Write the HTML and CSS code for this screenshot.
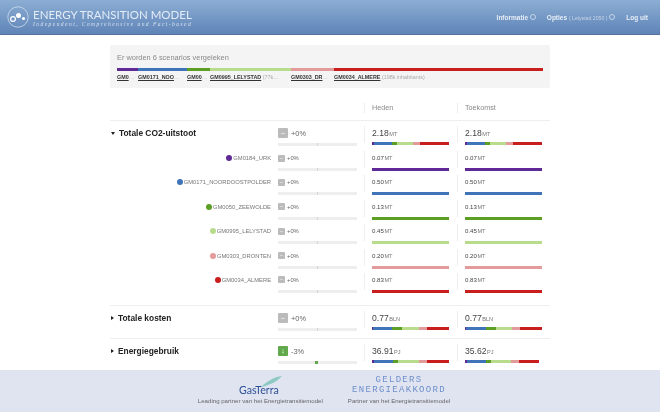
FILE: index.html
```html
<!DOCTYPE html>
<html>
<head>
    <title>Energy Transition Model</title>
    <link rel="stylesheet" href="styles.css">
</head>
<body>
    <div class="page">
        <header class="topbar">
            <div class="brand">
                <svg class="brand-logo" width="22" height="22" viewBox="0 0 22 22">
                    <circle cx="11" cy="11" r="10.2" fill="none" stroke="#cfdcec" stroke-width="0.8"/>
                    <circle cx="6" cy="13" r="2.4" fill="none" stroke="#fff" stroke-width="1.2"/>
                    <circle cx="11.5" cy="9.5" r="2.5" fill="#fff"/>
                    <circle cx="16.5" cy="12.5" r="1.6" fill="#fff"/>
                </svg>
                <div>
                    <div class="brand-title">ENERGY TRANSITION MODEL</div>
                    <div class="brand-sub">Independent, Comprehensive and Fact-based</div>
                </div>
            </div>
            <nav class="menu">
                <span>Informatie <i class="caret"></i></span>
                <span>Opties <small>( Lelystad 2050 )</small> <i class="caret"></i></span>
                <span>Log uit</span>
            </nav>
        </header>

        <section class="compare">
            <p class="compare-title">Er worden 6 scenarios vergeleken</p>
            <div class="compare-list">
                <div class="scenario w21"><div class="swatch purple"></div><div class="scenario-name"><b>GM0</b>…</div></div>
                <div class="scenario w49"><div class="swatch blue"></div><div class="scenario-name"><b>GM0171_NOO</b>…</div></div>
                <div class="scenario w23"><div class="swatch green"></div><div class="scenario-name"><b>GM00</b>…</div></div>
                <div class="scenario w81"><div class="swatch lime"></div><div class="scenario-name"><b>GM0995_LELYSTAD</b> (77k…</div></div>
                <div class="scenario w43"><div class="swatch pink"></div><div class="scenario-name"><b>GM0303_DR</b>…</div></div>
                <div class="scenario w209"><div class="swatch red"></div><div class="scenario-name"><b>GM0034_ALMERE</b> (198k inhabitants)</div></div>
            </div>
        </section>

        <div class="results">
            <div class="row head-row">
                <div class="label"></div>
                <div class="change"></div>
                <div class="value">Heden</div>
                <div class="value">Toekomst</div>
            </div>

            <div class="group group-open">
                <div class="row main-row">
                    <div class="label"><i class="arrow open"></i>Totale CO2-uitstoot</div>
                    <div class="change"><div class="delta"><span class="chip">–</span>+0%</div><div class="track"></div></div>
                    <div class="value"><div class="amount">2.18<small>MT</small></div>
                        <div class="bar">
                            <div class="purple" style="flex-grow:7"></div><div class="blue" style="flex-grow:50"></div><div class="green" style="flex-grow:13"></div><div class="lime" style="flex-grow:45"></div><div class="pink" style="flex-grow:20"></div><div class="red" style="flex-grow:83"></div>
                        </div>
                    </div>
                    <div class="value"><div class="amount">2.18<small>MT</small></div>
                        <div class="bar">
                            <div class="purple" style="flex-grow:7"></div><div class="blue" style="flex-grow:50"></div><div class="green" style="flex-grow:13"></div><div class="lime" style="flex-grow:45"></div><div class="pink" style="flex-grow:20"></div><div class="red" style="flex-grow:83"></div>
                        </div>
                    </div>
                </div>

                <div class="row sub-row">
                    <div class="label"><i class="dot purple"></i>GM0184_URK</div>
                    <div class="change"><div class="delta"><span class="chip">–</span>+0%</div><div class="track"></div></div>
                    <div class="value"><div class="amount">0.07<small>MT</small></div><div class="bar"><div class="purple"></div></div></div>
                    <div class="value"><div class="amount">0.07<small>MT</small></div><div class="bar"><div class="purple"></div></div></div>
                </div>
                <div class="row sub-row">
                    <div class="label"><i class="dot blue"></i>GM0171_NOORDOOSTPOLDER</div>
                    <div class="change"><div class="delta"><span class="chip">–</span>+0%</div><div class="track"></div></div>
                    <div class="value"><div class="amount">0.50<small>MT</small></div><div class="bar"><div class="blue"></div></div></div>
                    <div class="value"><div class="amount">0.50<small>MT</small></div><div class="bar"><div class="blue"></div></div></div>
                </div>
                <div class="row sub-row">
                    <div class="label"><i class="dot green"></i>GM0050_ZEEWOLDE</div>
                    <div class="change"><div class="delta"><span class="chip">–</span>+0%</div><div class="track"></div></div>
                    <div class="value"><div class="amount">0.13<small>MT</small></div><div class="bar"><div class="green"></div></div></div>
                    <div class="value"><div class="amount">0.13<small>MT</small></div><div class="bar"><div class="green"></div></div></div>
                </div>
                <div class="row sub-row">
                    <div class="label"><i class="dot lime"></i>GM0995_LELYSTAD</div>
                    <div class="change"><div class="delta"><span class="chip">–</span>+0%</div><div class="track"></div></div>
                    <div class="value"><div class="amount">0.45<small>MT</small></div><div class="bar"><div class="lime"></div></div></div>
                    <div class="value"><div class="amount">0.45<small>MT</small></div><div class="bar"><div class="lime"></div></div></div>
                </div>
                <div class="row sub-row">
                    <div class="label"><i class="dot pink"></i>GM0303_DRONTEN</div>
                    <div class="change"><div class="delta"><span class="chip">–</span>+0%</div><div class="track"></div></div>
                    <div class="value"><div class="amount">0.20<small>MT</small></div><div class="bar"><div class="pink"></div></div></div>
                    <div class="value"><div class="amount">0.20<small>MT</small></div><div class="bar"><div class="pink"></div></div></div>
                </div>
                <div class="row sub-row">
                    <div class="label"><i class="dot red"></i>GM0034_ALMERE</div>
                    <div class="change"><div class="delta"><span class="chip">–</span>+0%</div><div class="track"></div></div>
                    <div class="value"><div class="amount">0.83<small>MT</small></div><div class="bar"><div class="red"></div></div></div>
                    <div class="value"><div class="amount">0.83<small>MT</small></div><div class="bar"><div class="red"></div></div></div>
                </div>
            </div>

            <div class="group">
                <div class="row main-row">
                    <div class="label"><i class="arrow"></i>Totale kosten</div>
                    <div class="change"><div class="delta"><span class="chip">–</span>+0%</div><div class="track"></div></div>
                    <div class="value"><div class="amount">0.77<small>BLN</small></div>
                        <div class="bar">
                            <div class="purple" style="flex-grow:1"></div><div class="blue" style="flex-grow:19"></div><div class="green" style="flex-grow:10"></div><div class="lime" style="flex-grow:16"></div><div class="pink" style="flex-grow:8"></div><div class="red" style="flex-grow:22"></div>
                        </div>
                    </div>
                    <div class="value"><div class="amount">0.77<small>BLN</small></div>
                        <div class="bar">
                            <div class="purple" style="flex-grow:1"></div><div class="blue" style="flex-grow:20"></div><div class="green" style="flex-grow:10"></div><div class="lime" style="flex-grow:16"></div><div class="pink" style="flex-grow:8"></div><div class="red" style="flex-grow:22"></div>
                        </div>
                    </div>
                </div>
            </div>

            <div class="group">
                <div class="row main-row">
                    <div class="label"><i class="arrow"></i>Energiegebruik</div>
                    <div class="change"><div class="delta"><span class="chip down">↓</span>-3%</div><div class="track"><span class="track-fill"></span></div></div>
                    <div class="value"><div class="amount">36.91<small>PJ</small></div>
                        <div class="bar">
                            <div class="purple" style="flex-grow:2"></div><div class="blue" style="flex-grow:20"></div><div class="green" style="flex-grow:5"></div><div class="lime" style="flex-grow:22"></div><div class="pink" style="flex-grow:8"></div><div class="red" style="flex-grow:23"></div>
                        </div>
                    </div>
                    <div class="value"><div class="amount">35.62<small>PJ</small></div>
                        <div class="bar">
                            <div class="purple" style="flex-grow:2"></div><div class="blue" style="flex-grow:20"></div><div class="green" style="flex-grow:5"></div><div class="lime" style="flex-grow:21"></div><div class="pink" style="flex-grow:8"></div><div class="red" style="flex-grow:21"></div><div style="flex-grow:3"></div>
                        </div>
                    </div>
                </div>
            </div>
        </div>

        <footer class="partners">
            <div class="partner gasterra">
                <svg class="leaf" width="21" height="11" viewBox="0 0 21 11">
                    <path d="M0 11 C6 5 13 1 21 0 C17 5 9 9 0 11 Z" fill="#8fc9c4"/>
                </svg>
                <div class="gasterra-name">GasTerra</div>
                <div class="caption">Leading partner van het Energietransitiemodel</div>
            </div>
            <div class="partner gelders">
                <div class="gelders-name">GELDERS<br>ENERGIEAKKOORD</div>
                <div class="caption">Partner van het Energietransitiemodel</div>
            </div>
        </footer>
    </div>
</body>
</html>
```

FILE: styles.css
```css
html, body {
    margin: 0;
    padding: 0;
    height: 412px;
    overflow: hidden;
    background-color: #ffffff;
}
.page {
    height: 412px;
    overflow: hidden;
    position: relative;
    font-family: "Liberation Sans", Arial, sans-serif;
    color: #555555;
    filter: blur(0.5px);
}

/* top bar */
.topbar {
    height: 35px;
    box-sizing: border-box;
    display: flex;
    align-items: center;
    justify-content: space-between;
    padding: 0 12px 0 7px;
    background: linear-gradient(#8caed4, #5f84b7);
    border-bottom: 1px solid #56729e;
}
.brand {
    display: flex;
    align-items: center;
    gap: 4px;
}
.brand-logo {
    flex: none;
}
.brand-title {
    font-family: "Lato", sans-serif;
    font-size: 11.5px;
    line-height: 13px;
    margin-top: 2px;
    color: #e4ecf6;
}
.brand-sub {
    font-family: "Liberation Serif", serif;
    font-style: italic;
    font-size: 5.5px;
    line-height: 7px;
    letter-spacing: 1.45px;
    color: #d5e1ef;
}
.menu {
    display: flex;
    align-items: center;
    gap: 11px;
    font-size: 6.5px;
    font-weight: bold;
    color: #e6edf6;
}
.menu small {
    font-size: 5.2px;
    font-weight: normal;
    color: #c5d5e8;
}
.caret {
    display: inline-block;
    width: 4px;
    height: 4px;
    border: 0.5px solid #c5d5e8;
    border-radius: 50%;
    vertical-align: -0.5px;
}

/* compared scenarios */
.compare {
    width: 440px;
    height: 43px;
    box-sizing: border-box;
    margin: 10px 0 0 110px;
    padding: 8px 7px 0 7px;
    background-color: #f4f4f4;
    border-radius: 2px;
}
.compare-title {
    margin: 0 0 5px 0;
    font-size: 7.4px;
    line-height: 10px;
    color: #888888;
}
.compare-list {
    display: flex;
}
.scenario {
    flex: none;
}
.w21 { width: 21px; }
.w49 { width: 49px; }
.w23 { width: 23px; }
.w81 { width: 81px; }
.w43 { width: 43px; }
.w209 { width: 209px; }
.swatch {
    height: 3px;
}
.scenario-name {
    margin-top: 2px;
    font-size: 5.4px;
    line-height: 8px;
    color: #aaaaaa;
    white-space: nowrap;
    overflow: hidden;
}
.scenario-name b {
    color: #333333;
    text-decoration: underline;
}

/* results table */
.results {
    margin: 7px 0 0 110px;
    width: 440px;
}
.row {
    display: grid;
    grid-template-columns: 162px 92px 93px 93px;
}
.head-row {
    height: 26px;
    box-sizing: border-box;
    border-bottom: 1px solid #eeeeee;
}
.group {
    border-bottom: 1px solid #eeeeee;
}
.group-open {
    padding-bottom: 6px;
}
.head-row .value {
    margin-top: 8px;
    font-size: 7.2px;
    line-height: 10px;
    height: 10px;
    color: #888888;
}
.main-row {
    height: 32px;
    padding-top: 7px;
    box-sizing: border-box;
}
.sub-row {
    height: 24.4px;
}
.label {
    display: flex;
    align-items: flex-start;
    font-size: 8.4px;
    font-weight: bold;
    line-height: 10px;
    color: #222222;
    padding-left: 1px;
}
.sub-row .label {
    justify-content: flex-end;
    align-items: center;
    height: 10px;
    padding-right: 1px;
    font-size: 5.8px;
    font-weight: normal;
    color: #777777;
}
.arrow {
    width: 0;
    height: 0;
    margin: 3px 4px 0 0;
    border-left: 3px solid #222222;
    border-top: 2px solid transparent;
    border-bottom: 2px solid transparent;
}
.arrow.open {
    margin: 4px 4px 0 0;
    border-top: 3px solid #222222;
    border-bottom: none;
    border-left: 2px solid transparent;
    border-right: 2px solid transparent;
}
.dot {
    width: 6px;
    height: 6px;
    border-radius: 50%;
    margin-right: 1px;
}
.change {
    padding: 0 7px 0 6px;
}
.delta {
    display: flex;
    align-items: center;
    height: 10px;
    font-size: 7.4px;
    color: #666666;
}
.chip {
    width: 10px;
    height: 10px;
    margin-right: 3px;
    flex: none;
    border-radius: 1px;
    background-color: #bbbbbb;
    color: #ffffff;
    font-size: 7px;
    line-height: 10px;
    text-align: center;
}
.chip.down {
    background-color: #62a94e;
    font-weight: bold;
}
.sub-row .delta {
    font-size: 5.8px;
}
.sub-row .chip {
    width: 7px;
    height: 7px;
    margin-right: 2px;
    font-size: 5px;
    line-height: 7px;
}
.track {
    position: relative;
    height: 3px;
    margin-top: 5px;
    background-color: #eeeeee;
}
.track::after {
    content: "";
    position: absolute;
    left: 39px;
    top: 0;
    width: 1px;
    height: 3px;
    background-color: #d5d5d5;
}
.track-fill {
    position: absolute;
    z-index: 1;
    left: 37px;
    top: 0;
    width: 3px;
    height: 3px;
    background-color: #62a94e;
}
.value {
    border-left: 1px solid #eeeeee;
    padding: 0 8px 0 7px;
    height: 17px;
    margin-top: -2px;
}
.amount {
    margin-top: 2px;
    font-size: 8.6px;
    line-height: 10px;
    color: #444444;
}
.amount small {
    font-size: 5.6px;
    color: #777777;
    margin-left: 0.5px;
}
.sub-row .amount {
    font-size: 6.1px;
}
.bar {
    display: flex;
    height: 3px;
    margin-top: 3px;
}
.sub-row .bar {
    margin-top: 5px;
}
.bar div {
    flex: 1 1 0;
}

/* colours of the scenarios */
.purple { background-color: #5f2a96; }
.blue { background-color: #3f74b8; }
.green { background-color: #5d9e24; }
.lime { background-color: #b8dc8c; }
.pink { background-color: #e39a9a; }
.red { background-color: #c81e1e; }

/* partner logos stay fixed over the page */
.partners {
    position: absolute;
    left: 0;
    right: 0;
    bottom: 0;
    height: 42px;
    box-sizing: border-box;
    display: flex;
    justify-content: center;
    gap: 25px;
    padding-right: 12px;
    background-color: #dfe4f0;
}
.partner {
    display: flex;
    flex-direction: column;
    align-items: center;
    justify-content: flex-end;
    padding-bottom: 8px;
}
.leaf {
    margin: 0 0 -3px 22px;
}
.gasterra-name {
    margin-right: 3px;
    font-family: "Lato", sans-serif;
    font-size: 10.6px;
    line-height: 12px;
    color: #2d4f96;
}
.gelders-name {
    margin-bottom: 1px;
    font-family: "Liberation Mono", monospace;
    font-size: 9px;
    line-height: 10px;
    letter-spacing: 1.3px;
    text-align: center;
    color: #6f8fcb;
}
.caption {
    margin-top: 1px;
    font-size: 6.1px;
    line-height: 7px;
    color: #666666;
}
```
